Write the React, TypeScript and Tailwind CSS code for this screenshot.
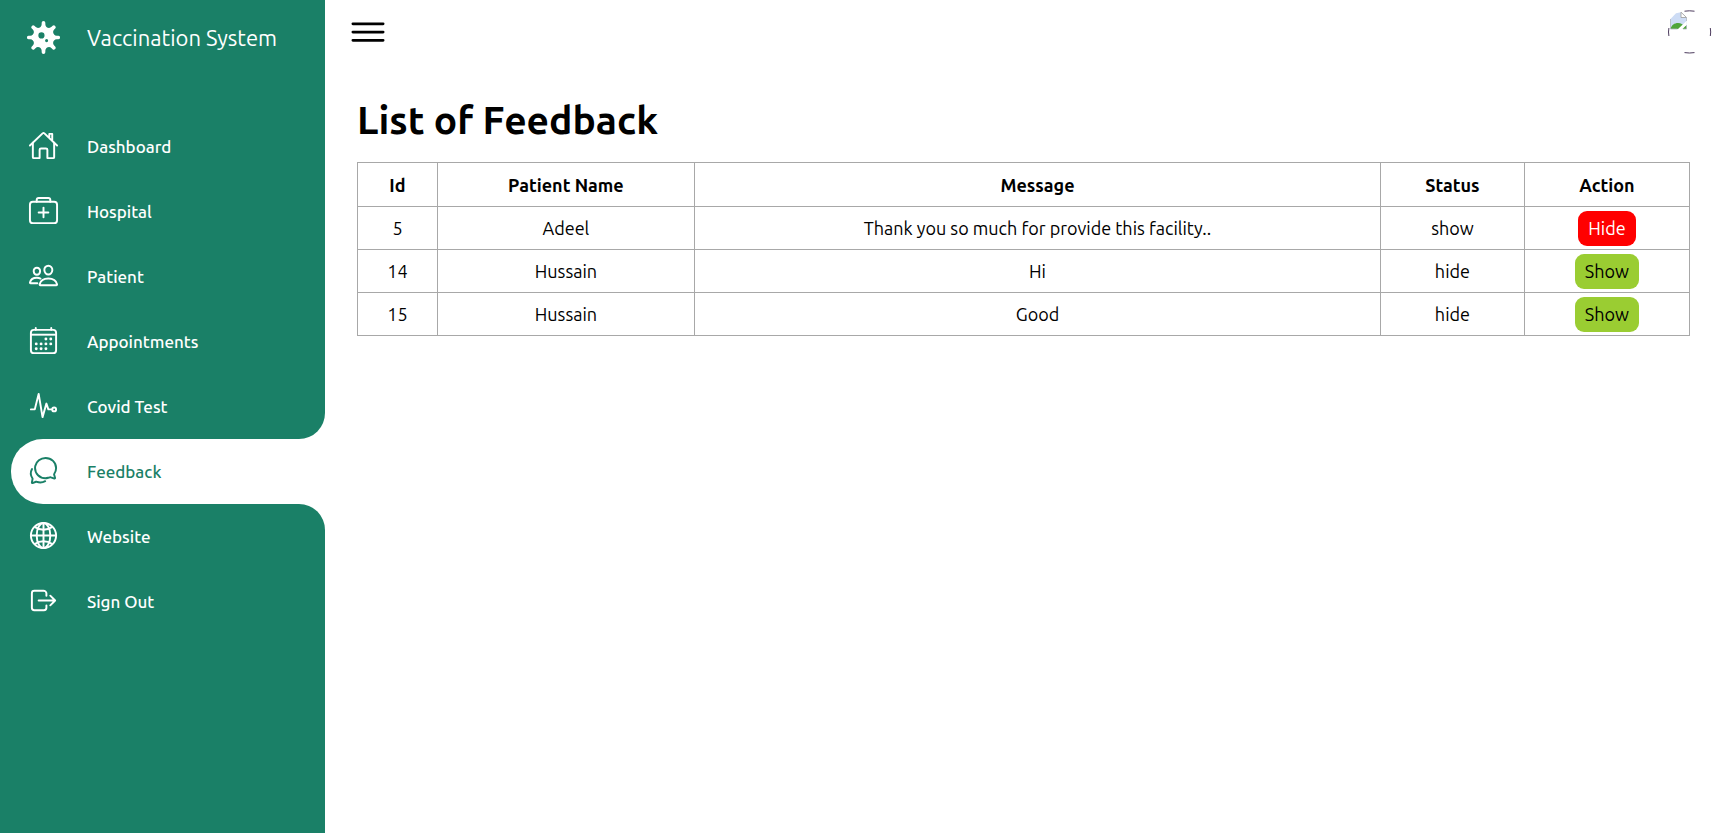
import { FaVirus } from "react-icons/fa";
import {
  IoCalendarOutline,
  IoChatbubblesOutline,
  IoGlobeOutline,
  IoHomeOutline,
  IoLogOutOutline,
  IoMedkitOutline,
  IoMenuOutline,
  IoPeopleOutline,
  IoPulseOutline,
} from "react-icons/io5";

const navItems = [
  { label: "Dashboard", Icon: IoHomeOutline },
  { label: "Hospital", Icon: IoMedkitOutline },
  { label: "Patient", Icon: IoPeopleOutline },
  { label: "Appointments", Icon: IoCalendarOutline },
  { label: "Covid Test", Icon: IoPulseOutline },
  { label: "Feedback", Icon: IoChatbubblesOutline, active: true },
  { label: "Website", Icon: IoGlobeOutline },
  { label: "Sign Out", Icon: IoLogOutOutline },
];

const feedback = [
  { id: 5, name: "Adeel", message: "Thank you so much for provide this facility..", status: "show" },
  { id: 14, name: "Hussain", message: "Hi", status: "hide" },
  { id: 15, name: "Hussain", message: "Good", status: "hide" },
];

function Sidebar() {
  return (
    <aside className="w-[325px] shrink-0 bg-[#1a8067] pl-[11px] pt-[5px] text-white">
      <a href="#" className="flex h-[65px] items-center">
        <span className="flex w-[65px] justify-center">
          <FaVirus size={33} />
        </span>
        <span className="pl-[11px] text-[22px]">Vaccination System</span>
      </a>
      <nav className="mt-11">
        <ul>
          {navItems.map(({ label, Icon, active }) => (
            <li
              key={label}
              className={active ? "relative rounded-l-[32px] bg-white text-[#1a8067]" : "relative"}
            >
              {active && (
                <>
                  <span className="absolute -top-[26px] right-0 size-[26px] bg-white">
                    <span className="block size-full rounded-br-[26px] bg-[#1a8067]" />
                  </span>
                  <span className="absolute -bottom-[26px] right-0 size-[26px] bg-white">
                    <span className="block size-full rounded-tr-[26px] bg-[#1a8067]" />
                  </span>
                </>
              )}
              <a href="#" className="flex h-[65px] items-center">
                <span className="flex w-[65px] justify-center pb-0.5">
                  <Icon size={31} />
                </span>
                <span className="pl-[11px] text-[17px] font-medium">{label}</span>
              </a>
            </li>
          ))}
        </ul>
      </nav>
    </aside>
  );
}

function Avatar() {
  return (
    <svg viewBox="0 0 44 44" className="size-11" role="img" aria-label="User">
      <path
        d="M16.500 1.200q5-.8 10 0M16.500 42.600q5 .8 10 0M.9 18q-.8 4 0 8M42.300 18q.8 4 0 8"
        fill="none"
        stroke="#4d3c5e"
        strokeWidth="1"
      />
      <path d="M2.500 9 8 3.200 13 2.200 18.500 7.500V19H2.500z" fill="#cddcf5" />
      <path d="M2.500 19c1-4 4-6 7.500-6 3 0 5 1.500 6.500 3h2v3z" fill="#4ea53a" />
      <path d="M9.500 19.500 18.500 11v4L14 19.500z" fill="#fff" />
      <path d="M13 2.200V7.500H18.500z" fill="#fff" stroke="#9a9a9a" strokeWidth=".8" />
      <path d="M2.500 9v10h7M18.500 7.500V11M18.500 15v4H15" fill="none" stroke="#b0b5c0" strokeWidth=".8" />
    </svg>
  );
}

export default function App() {
  return (
    <div className="flex min-h-screen bg-white font-['Ubuntu','Noto_Sans',sans-serif] text-black">
      <Sidebar />
      <main className="min-w-0 flex-1">
        <header className="flex h-16 items-center justify-between pl-[21px] pr-[10px]">
          <button type="button" aria-label="Toggle menu">
            <IoMenuOutline size={44} />
          </button>
          <Avatar />
        </header>
        <section className="px-8 pt-7">
          <h1 className="text-[39px] font-bold leading-[55px]">List of Feedback</h1>
          <table className="mt-[15px] w-full border-collapse text-center text-[18px] leading-[26px]">
            <thead>
              <tr className="h-11">
                <th className="w-[6%] border border-[#a8a8a8] p-0">Id</th>
                <th className="w-[19.3%] border border-[#a8a8a8] p-0">Patient Name</th>
                <th className="border border-[#a8a8a8] p-0">Message</th>
                <th className="w-[10.8%] border border-[#a8a8a8] p-0">Status</th>
                <th className="w-[12.4%] border border-[#a8a8a8] p-0">Action</th>
              </tr>
            </thead>
            <tbody>
              {feedback.map((row) => (
                <tr key={row.id} className="h-[43px]">
                  <td className="border border-[#a8a8a8] p-0">{row.id}</td>
                  <td className="border border-[#a8a8a8] p-0">{row.name}</td>
                  <td className="border border-[#a8a8a8] p-0">{row.message}</td>
                  <td className="border border-[#a8a8a8] p-0">{row.status}</td>
                  <td className="border border-[#a8a8a8] p-0">
                    {row.status === "show" ? (
                      <button type="button" className="mx-auto block h-[35px] rounded-[9px] bg-[#ff0000] px-[10px] text-white">
                        Hide
                      </button>
                    ) : (
                      <button type="button" className="mx-auto block h-[35px] rounded-[9px] bg-[#9acd32] px-[10px]">
                        Show
                      </button>
                    )}
                  </td>
                </tr>
              ))}
            </tbody>
          </table>
        </section>
      </main>
    </div>
  );
}
